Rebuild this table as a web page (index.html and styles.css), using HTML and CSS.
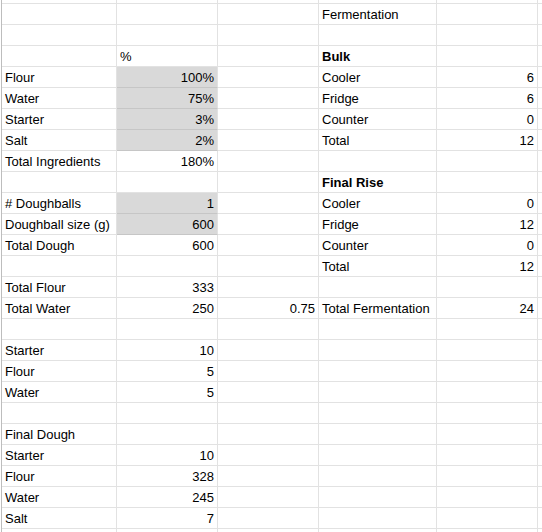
FILE: index.html
```html
<!DOCTYPE html>
<html>
<head>
<meta charset="utf-8">
<link rel="stylesheet" href="styles.css">
</head>
<body>
<div class="sheet">
  <div class="c top"></div><div class="c top"></div><div class="c top"></div><div class="c top"></div><div class="c top"></div><div class="c top"></div>

  <div class="c"></div><div class="c"></div><div class="c"></div><div class="c">Fermentation</div><div class="c"></div><div class="c"></div>
  <div class="c"></div><div class="c"></div><div class="c"></div><div class="c"></div><div class="c"></div><div class="c"></div>
  <div class="c"></div><div class="c">%</div><div class="c"></div><div class="c b">Bulk</div><div class="c"></div><div class="c"></div>
  <div class="c">Flour</div><div class="c r g">100%</div><div class="c"></div><div class="c">Cooler</div><div class="c r">6</div><div class="c"></div>
  <div class="c">Water</div><div class="c r g">75%</div><div class="c"></div><div class="c">Fridge</div><div class="c r">6</div><div class="c"></div>
  <div class="c">Starter</div><div class="c r g">3%</div><div class="c"></div><div class="c">Counter</div><div class="c r">0</div><div class="c"></div>
  <div class="c">Salt</div><div class="c r g">2%</div><div class="c"></div><div class="c">Total</div><div class="c r">12</div><div class="c"></div>
  <div class="c">Total Ingredients</div><div class="c r">180%</div><div class="c"></div><div class="c"></div><div class="c"></div><div class="c"></div>
  <div class="c"></div><div class="c"></div><div class="c"></div><div class="c b">Final Rise</div><div class="c"></div><div class="c"></div>
  <div class="c"># Doughballs</div><div class="c r g">1</div><div class="c"></div><div class="c">Cooler</div><div class="c r">0</div><div class="c"></div>
  <div class="c">Doughball size (g)</div><div class="c r g">600</div><div class="c"></div><div class="c">Fridge</div><div class="c r">12</div><div class="c"></div>
  <div class="c">Total Dough</div><div class="c r">600</div><div class="c"></div><div class="c">Counter</div><div class="c r">0</div><div class="c"></div>
  <div class="c"></div><div class="c"></div><div class="c"></div><div class="c">Total</div><div class="c r">12</div><div class="c"></div>
  <div class="c">Total Flour</div><div class="c r">333</div><div class="c"></div><div class="c"></div><div class="c"></div><div class="c"></div>
  <div class="c">Total Water</div><div class="c r">250</div><div class="c r">0.75</div><div class="c">Total Fermentation</div><div class="c r">24</div><div class="c"></div>
  <div class="c"></div><div class="c"></div><div class="c"></div><div class="c"></div><div class="c"></div><div class="c"></div>
  <div class="c">Starter</div><div class="c r">10</div><div class="c"></div><div class="c"></div><div class="c"></div><div class="c"></div>
  <div class="c">Flour</div><div class="c r">5</div><div class="c"></div><div class="c"></div><div class="c"></div><div class="c"></div>
  <div class="c">Water</div><div class="c r">5</div><div class="c"></div><div class="c"></div><div class="c"></div><div class="c"></div>
  <div class="c"></div><div class="c"></div><div class="c"></div><div class="c"></div><div class="c"></div><div class="c"></div>
  <div class="c">Final Dough</div><div class="c"></div><div class="c"></div><div class="c"></div><div class="c"></div><div class="c"></div>
  <div class="c">Starter</div><div class="c r">10</div><div class="c"></div><div class="c"></div><div class="c"></div><div class="c"></div>
  <div class="c">Flour</div><div class="c r">328</div><div class="c"></div><div class="c"></div><div class="c"></div><div class="c"></div>
  <div class="c">Water</div><div class="c r">245</div><div class="c"></div><div class="c"></div><div class="c"></div><div class="c"></div>
  <div class="c">Salt</div><div class="c r">7</div><div class="c"></div><div class="c"></div><div class="c"></div><div class="c"></div>

  <div class="c"></div><div class="c"></div><div class="c"></div><div class="c"></div><div class="c"></div><div class="c"></div>
</div>
</body>
</html>
```

FILE: styles.css
```css
html, body {
  margin: 0;
  padding: 0;
  background: #ffffff;
  overflow: hidden;
}

.sheet {
  display: grid;
  grid-template-columns: 115px 101px 101px 118px 101px 20px;
  grid-template-rows: 4px;
  grid-auto-rows: 21px;
  margin-left: 1px;
  border-left: 1px solid #bdbdbd;
  font-family: "Liberation Sans", Arial, sans-serif;
  font-size: 13px;
  color: #000000;
}

.c {
  box-sizing: border-box;
  border-right: 1px solid #e2e2e2;
  border-bottom: 1px solid #e2e2e2;
  padding: 1px 3px 0;
  line-height: 20px;
  white-space: nowrap;
  overflow: hidden;
}

.top {
  padding: 0;
  line-height: 0;
}

.r {
  text-align: right;
}

.b {
  font-weight: bold;
}

.g {
  background: #d9d9d9;
  border-bottom-color: #c6c6c6;
}
```
